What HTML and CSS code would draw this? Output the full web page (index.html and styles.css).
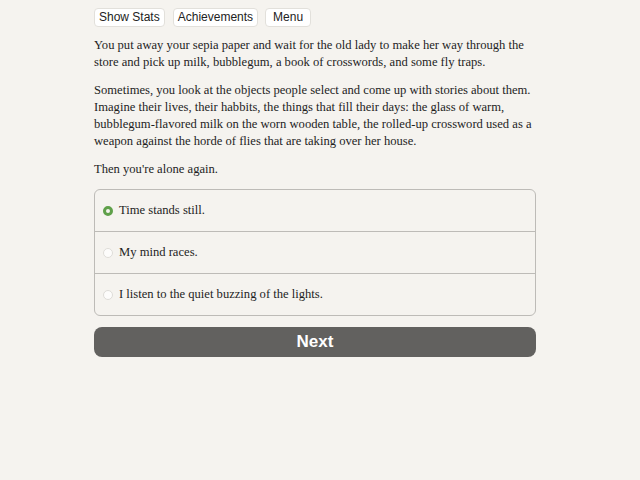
FILE: index.html
```html
<!DOCTYPE html>
<html>
<head>
<meta charset="utf-8">
<link rel="stylesheet" href="styles.css">
</head>
<body>
<div class="page">
  <div class="topbar">
    <button class="tool-btn">Show Stats</button>
    <button class="tool-btn">Achievements</button>
    <button class="tool-btn menu-btn">Menu</button>
  </div>
  <div class="story">
    <p>You put away your sepia paper and wait for the old lady to make her way through the store and pick up milk, bubblegum, a book of crosswords, and some fly traps.</p>
    <p>Sometimes, you look at the objects people select and come up with stories about them. Imagine their lives, their habbits, the things that fill their days: the glass of warm, bubblegum-flavored milk on the worn wooden table, the rolled-up crossword used as a weapon against the horde of flies that are taking over her house.</p>
    <p>Then you're alone again.</p>
  </div>
  <form class="choices">
    <label class="choice">
      <input type="radio" name="choice" checked>
      <span class="dot"></span>
      <span>Time stands still.</span>
    </label>
    <label class="choice">
      <input type="radio" name="choice">
      <span class="dot"></span>
      <span>My mind races.</span>
    </label>
    <label class="choice">
      <input type="radio" name="choice">
      <span class="dot"></span>
      <span>I listen to the quiet buzzing of the lights.</span>
    </label>
  </form>
  <button class="next-btn">Next</button>
</div>
</body>
</html>
```

FILE: styles.css
```css
html, body {
  margin: 0;
  padding: 0;
  background: #f5f3ef;
}

.page {
  width: 442px;
  margin-left: 94px;
  padding-top: 8px;
  font-family: "Liberation Serif", serif;
  color: #1e1e1e;
}

.topbar {
  display: flex;
  gap: 8px;
}

.tool-btn {
  font-family: "Liberation Sans", Arial, sans-serif;
  font-size: 12px;
  color: #222;
  background: #ffffff;
  border: 1px solid #e2e0db;
  border-radius: 4px;
  height: 19px;
  padding: 0 4px;
  line-height: 17px;
}

.menu-btn {
  margin-left: -1px;
  padding: 0 7px;
}

.story {
  margin-top: 10px;
  font-size: 12.6px;
  line-height: 17px;
}

.story p {
  margin: 0 0 11px;
}

.choices {
  margin-top: 9px;
  border: 1px solid #bdbbb7;
  border-radius: 6px;
  overflow: hidden;
}

.choice {
  display: flex;
  align-items: center;
  gap: 6px;
  height: 41px;
  padding-left: 8px;
  font-size: 12.6px;
  color: #1e1e1e;
}

.choice + .choice {
  border-top: 1px solid #bdbbb7;
}

.choice input {
  display: none;
}

.dot {
  width: 10px;
  height: 10px;
  border-radius: 50%;
  background: #fdfcfb;
  border: 1px solid #dedcd8;
  box-sizing: border-box;
}

.choice input:checked + .dot {
  border: 3px solid #5fa04a;
  background: #f5f3ef;
}

.next-btn {
  display: block;
  width: 100%;
  margin-top: 11px;
  height: 30px;
  border: none;
  border-radius: 8px;
  background: #62615f;
  color: #ffffff;
  font-family: "Liberation Sans", Arial, sans-serif;
  font-weight: bold;
  font-size: 17px;
}
```
